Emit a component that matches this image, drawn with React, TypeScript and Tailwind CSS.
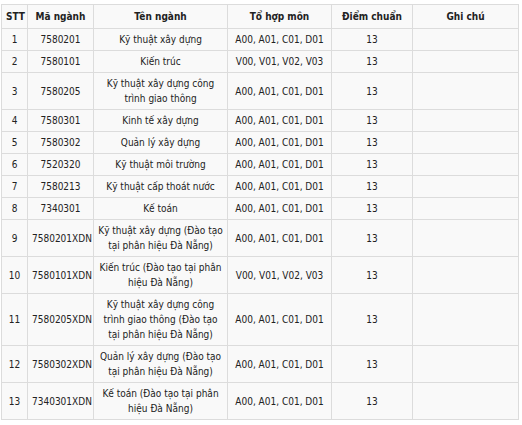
const rows: [string, string, string, string, string][] = [
  ["1", "7580201", "Kỹ thuật xây dựng", "A00, A01, C01, D01", "13"],
  ["2", "7580101", "Kiến trúc", "V00, V01, V02, V03", "13"],
  ["3", "7580205", "Kỹ thuật xây dựng công trình giao thông", "A00, A01, C01, D01", "13"],
  ["4", "7580301", "Kinh tế xây dựng", "A00, A01, C01, D01", "13"],
  ["5", "7580302", "Quản lý xây dựng", "A00, A01, C01, D01", "13"],
  ["6", "7520320", "Kỹ thuật môi trường", "A00, A01, C01, D01", "13"],
  ["7", "7580213", "Kỹ thuật cấp thoát nước", "A00, A01, C01, D01", "13"],
  ["8", "7340301", "Kế toán", "A00, A01, C01, D01", "13"],
  ["9", "7580201XDN", "Kỹ thuật xây dựng (Đào tạo tại phân hiệu Đà Nẵng)", "A00, A01, C01, D01", "13"],
  ["10", "7580101XDN", "Kiến trúc (Đào tạo tại phân hiệu Đà Nẵng)", "V00, V01, V02, V03", "13"],
  ["11", "7580205XDN", "Kỹ thuật xây dựng công trình giao thông (Đào tạo tại phân hiệu Đà Nẵng)", "A00, A01, C01, D01", "13"],
  ["12", "7580302XDN", "Quản lý xây dựng (Đào tạo tại phân hiệu Đà Nẵng)", "A00, A01, C01, D01", "13"],
  ["13", "7340301XDN", "Kế toán (Đào tạo tại phân hiệu Đà Nẵng)", "A00, A01, C01, D01", "13"],
];

const headers = ["STT", "Mã ngành", "Tên ngành", "Tổ hợp môn", "Điểm chuẩn", "Ghi chú"];

export default function App() {
  return (
    <div className="bg-white w-[522px] h-[425px] pt-[4px] pl-[1px] font-['DejaVu_Sans_Condensed','DejaVu_Sans',sans-serif] text-[10px] leading-[15px] text-[#222]">
      <table className="table-fixed border-collapse w-[517px] bg-[#f9f9f9]">
        <colgroup>
          <col className="w-[26px]" />
          <col className="w-[66px]" />
          <col className="w-[134px]" />
          <col className="w-[104px]" />
          <col className="w-[81px]" />
          <col className="w-[106px]" />
        </colgroup>
        <thead>
          <tr>
            {headers.map((h) => (
              <th key={h} className="border border-[#dcdcdc] px-[4px] py-[4px] font-bold text-center">
                {h}
              </th>
            ))}
          </tr>
        </thead>
        <tbody>
          {rows.map((r) => (
            <tr key={r[0]}>
              {r.map((c, i) => (
                <td key={i} className="border border-[#dcdcdc] px-[4px] py-[3px] text-center">
                  {c}
                </td>
              ))}
              <td className="border border-[#dcdcdc]"></td>
            </tr>
          ))}
        </tbody>
      </table>
    </div>
  );
}
